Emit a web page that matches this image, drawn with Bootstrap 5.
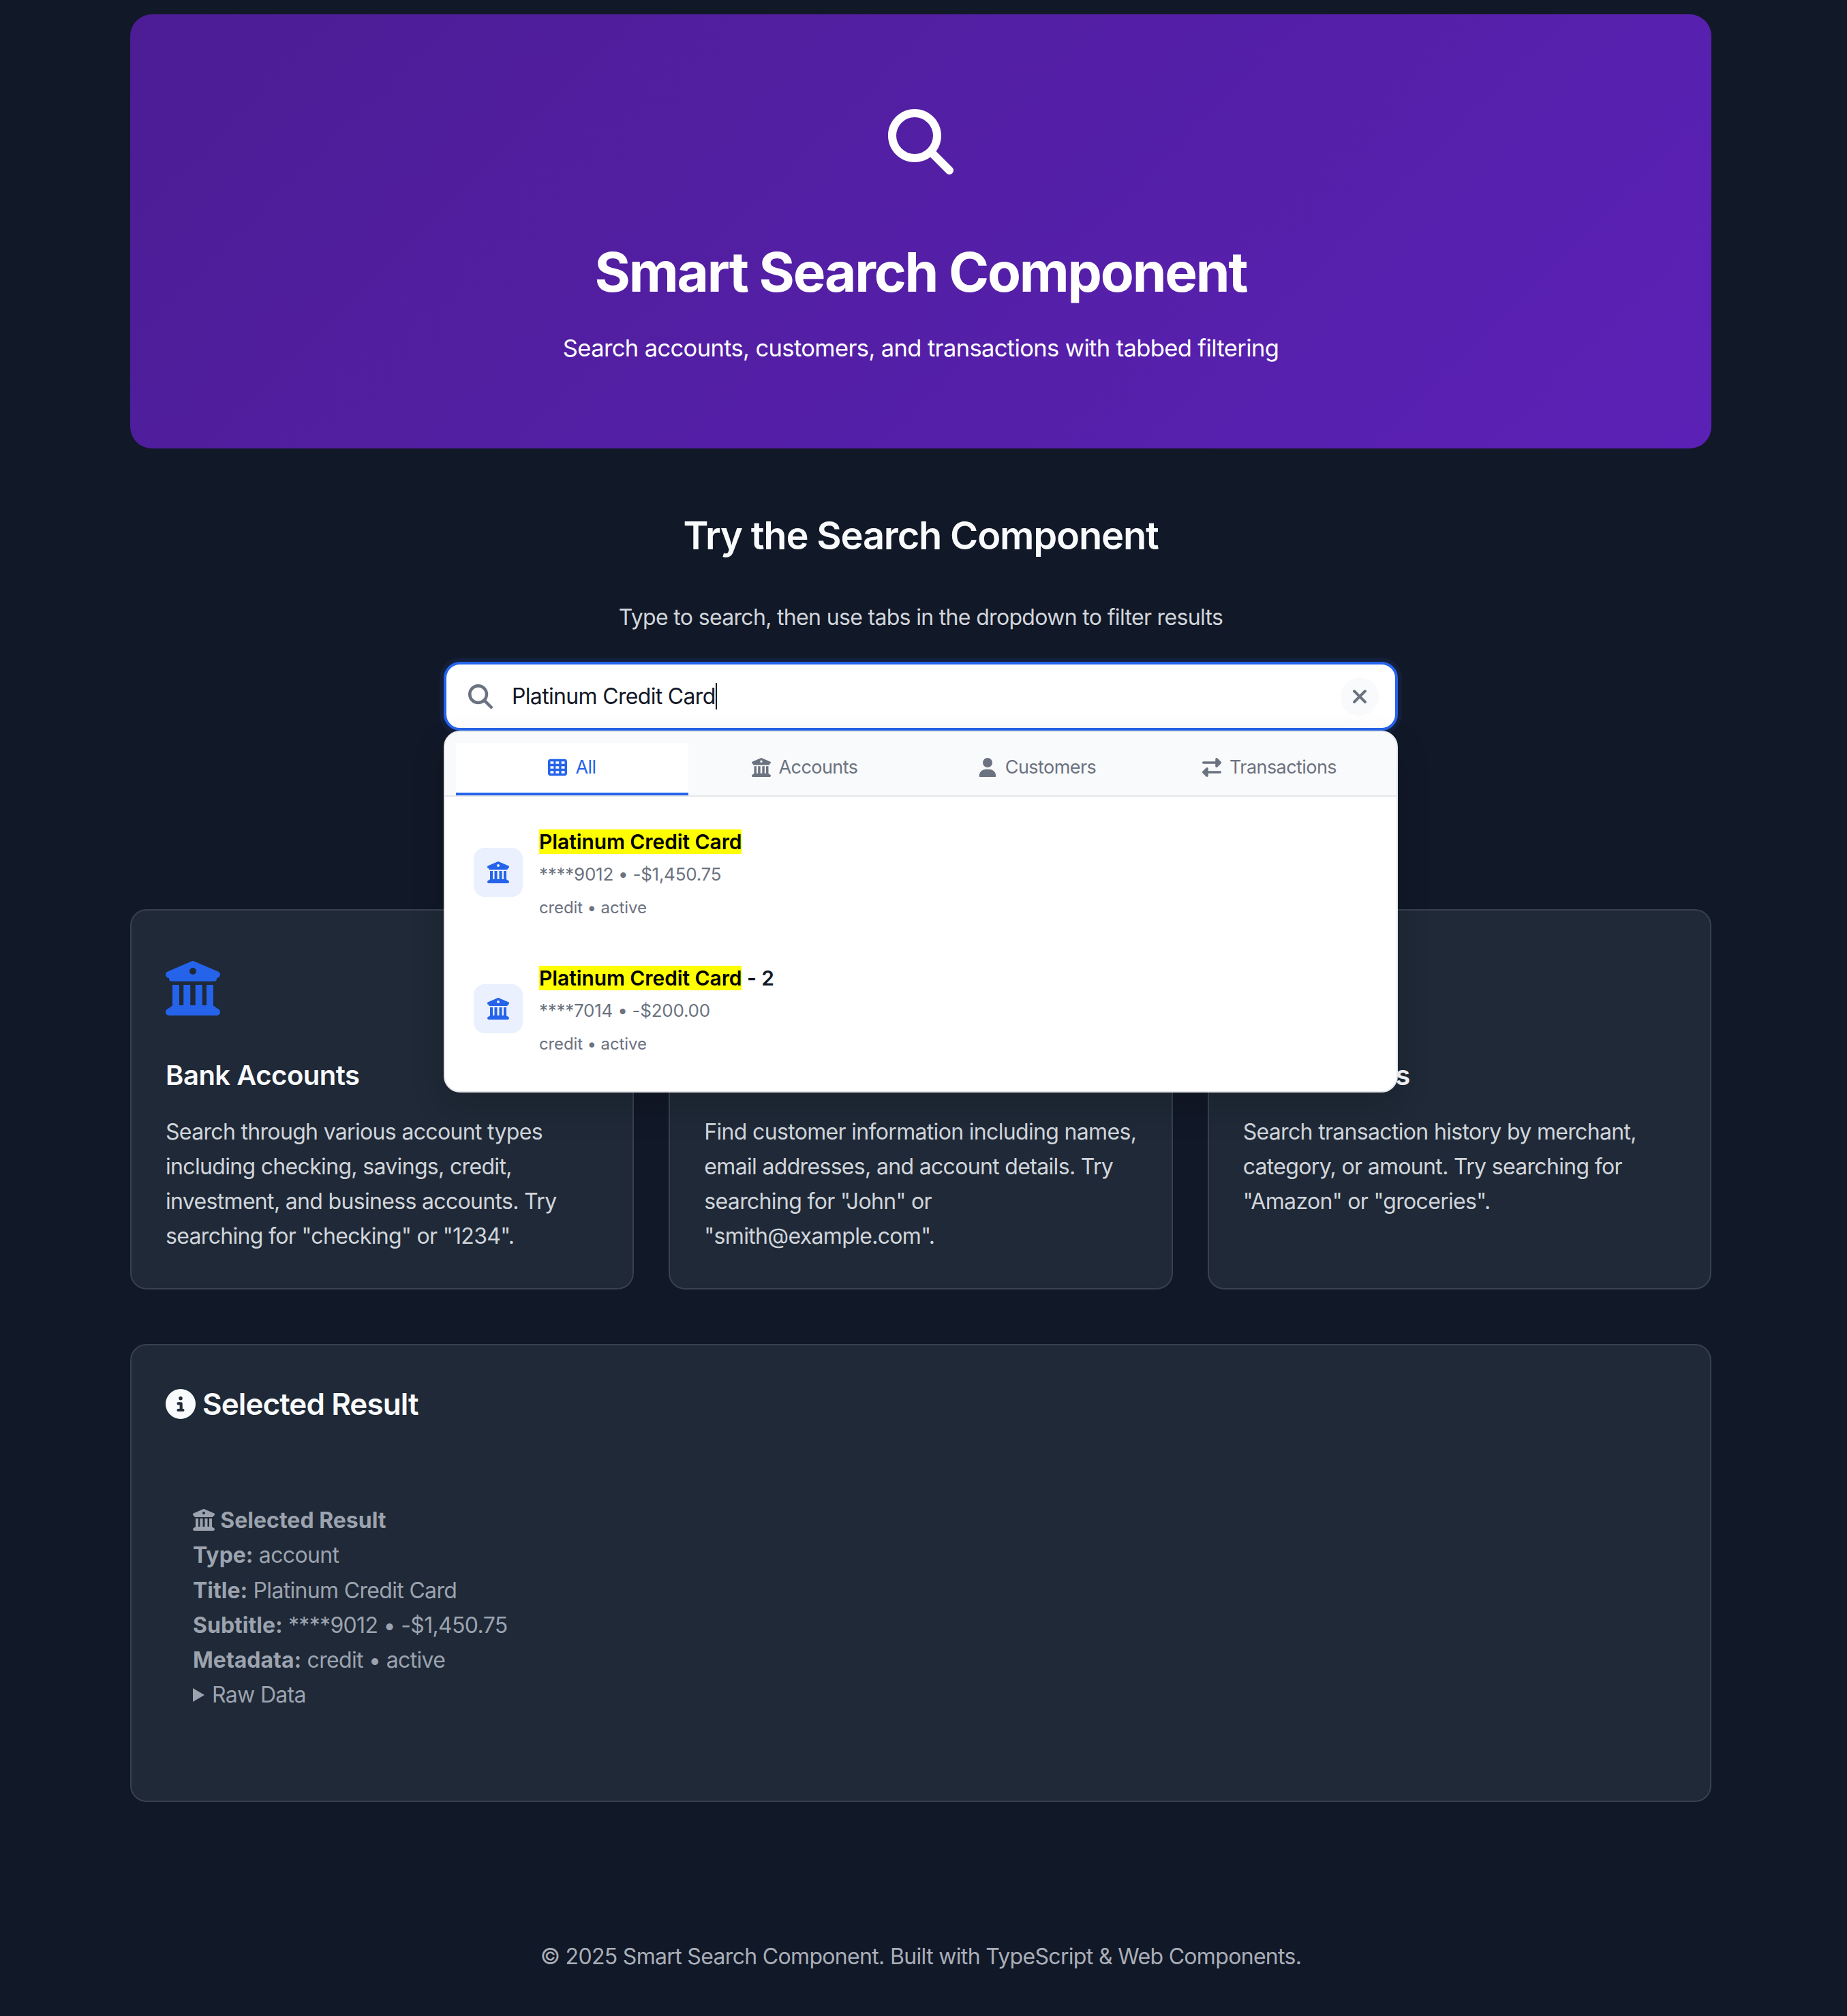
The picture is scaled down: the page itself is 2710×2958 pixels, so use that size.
<!DOCTYPE html>
<html lang="en">
<head>
  <meta charset="UTF-8" />
  <title>Smart Search Component</title>
  <link href="https://cdn.jsdelivr.net/npm/bootstrap@5.3.0/dist/css/bootstrap.min.css" rel="stylesheet" />
  <style>
    body {
      background: #111827;
      color: #f9fafb;
      font-family: Inter, "Liberation Sans", sans-serif;
      font-size: 32px;
      line-height: 51.2px;
    }
    body * { letter-spacing: -.021em; }
    .page-wrap { width: 2320px; margin-left: 191px; padding-top: 21px; }
    .ico { fill: currentColor; display: inline-block; flex: none; }

    .hero-box {
      height: 637px;
      padding-top: 139px;
      border-radius: 32px;
      background: linear-gradient(135deg, #4c1d95, #5b21b6);
      text-align: center;
      color: #fff;
    }
    .hero-box .ico { width: 96px; height: 96px; display: block; margin: 0 auto 95px; }
    .hero-title { font-size: 80px; line-height: 96px; font-weight: 700; margin: 0 0 35px; letter-spacing: -2.2px; }
    .hero-sub { font-size: 34.5px; line-height: 58px; margin: 0; letter-spacing: -.018em; }

    .demo-sec { text-align: center; padding-top: 92px; }
    .demo-title { font-size: 56px; line-height: 72px; font-weight: 600; margin: 0 0 58px; letter-spacing: -1.2px; }
    .demo-desc { color: #d1d5db; margin: 0 0 40px; }

    .search-wrap { position: relative; width: 1400px; margin: 0 auto; text-align: left; }
    .search-field {
      height: 101px;
      padding: 0 24px 0 32px;
      background: #fff;
      border: 4px solid #2563eb;
      border-radius: 24px;
      box-shadow: 0 0 0 6px rgba(37, 99, 235, .1);
      color: #111827;
    }
    .search-field > .ico { width: 36px; height: 36px; color: #6b7280; margin-right: 28px; }
    .typed-text { border-right: 2px solid #111827; line-height: 38px; }
    .clear-btn {
      width: 56px;
      height: 56px;
      border: 0;
      padding: 0;
      border-radius: 50%;
      background: #f9fafb;
      color: #6b7280;
    }
    .clear-btn .ico { width: 24px; height: 32px; }

    .search-drop {
      position: absolute;
      top: 100%;
      left: 0;
      right: 0;
      z-index: 5;
      background: #fff;
      border: 2px solid #e5e7eb;
      border-radius: 24px;
      box-shadow: 0 20px 50px rgba(0, 0, 0, .15);
      overflow: hidden;
    }
    .tab-bar { background: #f9fafb; border-bottom: 2px solid #e5e7eb; padding: 16px 16px 0; }
    .tab-item {
      flex: 1 1 0;
      height: 77px;
      padding-bottom: 2px;
      font-size: 27px;
      line-height: 34px;
      color: #6b7280;
      border-bottom: 4px solid transparent;
      gap: 12px;
    }
    .tab-item .ico { width: 28px; height: 28px; }
    .tab-on { background: #fff; color: #2563eb; border-bottom-color: #2563eb; }

    .res-list { padding: 11px 0 21px; }
    .res-row { height: 200px; padding: 0 24px 0 42px; gap: 24px; }
    .res-tile {
      width: 72px;
      height: 72px;
      border-radius: 16px;
      background: #eaf0fe;
      color: #2563eb;
    }
    .res-tile .ico { width: 32px; height: 32px; }
    .res-text { padding-top: 6px; }
    .res-title { font-size: 30px; line-height: 36px; font-weight: 600; color: #111827; margin-bottom: 12px; letter-spacing: -.003em; }
    .res-title span { background: #ff0; color: #000; letter-spacing: -.003em; }
    .res-sub { font-size: 26px; line-height: 36px; color: #6b7280; margin-bottom: 14px; letter-spacing: -.01em; }
    .res-meta { font-size: 24px; line-height: 34px; color: #6b7280; letter-spacing: -.005em; }

    .feat-grid { display: grid; grid-template-columns: repeat(3, 1fr); gap: 51px; margin-top: 262px; }
    .dark-card {
      background: #1f2937;
      border: 2px solid #374151;
      border-radius: 24px;
      color: #d1d5db;
    }
    .feat-card { height: 558px; padding: 74px 50px 0; }
    .feat-card > .ico { width: 80px; height: 80px; color: #2563eb; display: block; margin-bottom: 56px; }
    .feat-title { font-size: 40px; line-height: 64px; font-weight: 600; color: #f9fafb; margin: 0 0 25px; letter-spacing: -.012em; }
    .feat-text { margin: 0; line-height: 51px; }

    .picked-box { height: 672px; margin-top: 80px; padding: 56px 50px 0; }
    .picked-head { font-size: 44px; line-height: 60px; font-weight: 600; color: #f9fafb; margin: 0 0 115px; gap: 10px; }
    .picked-head .ico { width: 44px; height: 44px; }
    .picked-body { padding-left: 40px; color: #9ca3af; }
    .picked-body .ico { width: 32px; height: 32px; vertical-align: -4px; }
    .picked-body b { font-weight: 700; letter-spacing: 0; }
    .picked-body summary { cursor: pointer; list-style: none; display: flex; align-items: center; gap: 11px; }
    .picked-body summary::-webkit-details-marker { display: none; }
    .picked-body summary::before {
      content: "";
      border-left: 17px solid currentColor;
      border-top: 10px solid transparent;
      border-bottom: 10px solid transparent;
    }

    .foot-line { text-align: center; color: #a9aeb8; margin-top: 201px; padding-bottom: 64px; }
  </style>
</head>
<body>
  <svg width="0" height="0" class="position-absolute">
    <symbol id="i-search" viewBox="0 0 512 512"><path d="M416 208c0 45.900-14.900 88.300-40 122.700L502.600 457.400c12.500 12.500 12.500 32.800 0 45.300s-32.800 12.500-45.300 0L330.700 376c-34.400 25.200-76.800 40-122.700 40C93.100 416 0 322.900 0 208S93.100 0 208 0S416 93.100 416 208zM208 352a144 144 0 1 0 0-288 144 144 0 1 0 0 288z"/></symbol>
    <symbol id="i-bank" viewBox="0 0 512 512"><path d="M243.400 2.600l-224 96c-14 6-21.800 21-18.700 35.800S16.800 160 32 160v8c0 13.300 10.700 24 24 24H456c13.300 0 24-10.700 24-24v-8c15.200 0 28.300-10.700 31.300-25.600s-4.800-29.900-18.700-35.800l-224-96c-8-3.400-17.200-3.400-25.200 0zM128 224H64V420.300c-.6 .3-1.200 .7-1.800 1.100l-48 32c-11.700 7.800-17 22.400-12.900 35.900S17.900 512 32 512H480c14.100 0 26.500-9.200 30.600-22.700s-1.100-28.100-12.900-35.900l-48-32c-.6-.4-1.200-.7-1.800-1.100V224H384V416H344V224H280V416H232V224H168V416H128V224zM256 64a32 32 0 1 1 0 64 32 32 0 1 1 0-64z"/></symbol>
    <symbol id="i-grid" viewBox="0 0 512 512"><path d="M64 32C28.700 32 0 60.700 0 96V416c0 35.300 28.700 64 64 64H448c35.300 0 64-28.700 64-64V96c0-35.300-28.700-64-64-64H64zm88 64v64H64V96h88zm56 0h88v64H208V96zm240 0v64H360V96h88zM64 224h88v64H64V224zm232 0v64H208V224h88zm64 0h88v64H360V224zM152 352v64H64V352h88zm56 0h88v64H208V352zm240 0v64H360V352h88z"/></symbol>
    <symbol id="i-user" viewBox="0 0 448 512"><path d="M224 256A128 128 0 1 0 224 0a128 128 0 1 0 0 256zm-45.700 48C79.800 304 0 383.800 0 482.300C0 498.700 13.300 512 29.700 512H418.300c16.400 0 29.700-13.300 29.700-29.700C448 383.800 368.200 304 269.700 304H178.300z"/></symbol>
    <symbol id="i-swap" viewBox="0 0 512 512"><path d="M32 96l320 0V32c0-12.900 7.800-24.600 19.800-29.600s25.700-2.200 34.900 6.900l96 96c6 6 9.400 14.100 9.400 22.600s-3.400 16.600-9.400 22.600l-96 96c-9.200 9.200-22.900 11.900-34.900 6.900s-19.800-16.600-19.800-29.600V160L32 160c-17.700 0-32-14.300-32-32s14.300-32 32-32zM480 352c17.700 0 32 14.300 32 32s-14.300 32-32 32H160v64c0 12.900-7.800 24.600-19.800 29.600s-25.700 2.200-34.900-6.900l-96-96c-6-6-9.400-14.100-9.400-22.600s3.400-16.600 9.400-22.600l96-96c9.200-9.200 22.900-11.900 34.900-6.900s19.800 16.600 19.800 29.600l0 64H480z"/></symbol>
    <symbol id="i-info" viewBox="0 0 512 512"><path d="M256 512A256 256 0 1 0 256 0a256 256 0 1 0 0 512zM216 336h24V272H216c-13.300 0-24-10.700-24-24s10.700-24 24-24h48c13.300 0 24 10.700 24 24v88h8c13.300 0 24 10.700 24 24s-10.700 24-24 24H216c-13.300 0-24-10.700-24-24s10.700-24 24-24zm40-208a32 32 0 1 1 0 64 32 32 0 1 1 0-64z"/></symbol>
    <symbol id="i-x" viewBox="0 0 384 512"><path d="M342.600 150.600c12.500-12.500 12.500-32.800 0-45.300s-32.800-12.500-45.300 0L192 210.700 86.600 105.400c-12.500-12.500-32.800-12.500-45.300 0s-12.500 32.800 0 45.300L146.700 256 41.400 361.400c-12.500 12.500-12.500 32.800 0 45.300s32.800 12.500 45.300 0L192 301.300 297.400 406.600c12.500 12.500 32.800 12.500 45.300 0s12.500-32.800 0-45.300L237.300 256 342.600 150.600z"/></symbol>
  </svg>

  <div class="page-wrap">
    <!-- hero -->
    <header class="hero-box">
      <svg class="ico"><use href="#i-search"/></svg>
      <h1 class="hero-title">Smart Search Component</h1>
      <p class="hero-sub">Search accounts, customers, and transactions with tabbed filtering</p>
    </header>

    <!-- search demo -->
    <section class="demo-sec">
      <h2 class="demo-title">Try the Search Component</h2>
      <p class="demo-desc">Type to search, then use tabs in the dropdown to filter results</p>

      <div class="search-wrap">
        <div class="search-field d-flex align-items-center">
          <svg class="ico"><use href="#i-search"/></svg>
          <div class="flex-grow-1"><span class="typed-text">Platinum Credit Card</span></div>
          <button type="button" class="clear-btn d-flex align-items-center justify-content-center">
            <svg class="ico"><use href="#i-x"/></svg>
          </button>
        </div>

        <div class="search-drop">
          <div class="tab-bar d-flex">
            <div class="tab-item tab-on d-flex align-items-center justify-content-center"><svg class="ico"><use href="#i-grid"/></svg>All</div>
            <div class="tab-item d-flex align-items-center justify-content-center"><svg class="ico"><use href="#i-bank"/></svg>Accounts</div>
            <div class="tab-item d-flex align-items-center justify-content-center"><svg class="ico"><use href="#i-user"/></svg>Customers</div>
            <div class="tab-item d-flex align-items-center justify-content-center"><svg class="ico"><use href="#i-swap"/></svg>Transactions</div>
          </div>
          <div class="res-list">
            <div class="res-row d-flex align-items-center">
              <div class="res-tile d-flex align-items-center justify-content-center"><svg class="ico"><use href="#i-bank"/></svg></div>
              <div class="res-text">
                <div class="res-title"><span>Platinum Credit Card</span></div>
                <div class="res-sub">****9012 • -$1,450.75</div>
                <div class="res-meta">credit • active</div>
              </div>
            </div>
            <div class="res-row d-flex align-items-center">
              <div class="res-tile d-flex align-items-center justify-content-center"><svg class="ico"><use href="#i-bank"/></svg></div>
              <div class="res-text">
                <div class="res-title"><span>Platinum Credit Card</span> - 2</div>
                <div class="res-sub">****7014 • -$200.00</div>
                <div class="res-meta">credit • active</div>
              </div>
            </div>
          </div>
        </div>
      </div>
    </section>

    <!-- feature cards, partly under the dropdown -->
    <section class="feat-grid">
      <div class="dark-card feat-card">
        <svg class="ico"><use href="#i-bank"/></svg>
        <h3 class="feat-title">Bank Accounts</h3>
        <p class="feat-text">Search through various account types including checking, savings, credit, investment, and business accounts. Try searching for "checking" or "1234".</p>
      </div>
      <div class="dark-card feat-card">
        <svg class="ico"><use href="#i-user"/></svg>
        <h3 class="feat-title">Customers</h3>
        <p class="feat-text">Find customer information including names, email addresses, and account details. Try searching for "John" or "smith@example.com".</p>
      </div>
      <div class="dark-card feat-card">
        <svg class="ico"><use href="#i-swap"/></svg>
        <h3 class="feat-title">Transactions</h3>
        <p class="feat-text">Search transaction history by merchant, category, or amount. Try searching for "Amazon" or "groceries".</p>
      </div>
    </section>

    <!-- selected result -->
    <section class="dark-card picked-box">
      <h3 class="picked-head d-flex align-items-center"><svg class="ico"><use href="#i-info"/></svg>Selected Result</h3>
      <div class="picked-body">
        <div><svg class="ico"><use href="#i-bank"/></svg> <b>Selected Result</b></div>
        <div><b>Type:</b> account</div>
        <div><b>Title:</b> Platinum Credit Card</div>
        <div><b>Subtitle:</b> ****9012 • -$1,450.75</div>
        <div><b>Metadata:</b> credit • active</div>
        <details>
          <summary>Raw Data</summary>
        </details>
      </div>
    </section>

    <footer class="foot-line">© 2025 Smart Search Component. Built with TypeScript &amp; Web Components.</footer>
  </div>

  <script src="https://cdn.jsdelivr.net/npm/bootstrap@5.3.0/dist/js/bootstrap.bundle.min.js"></script>
</body>
</html>
